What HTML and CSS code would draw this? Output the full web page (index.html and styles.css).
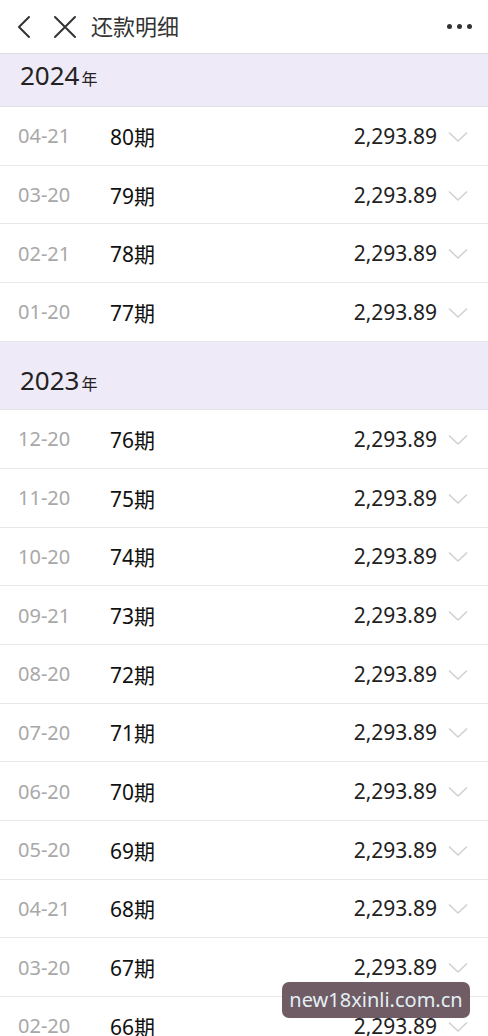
FILE: index.html
```html
<!DOCTYPE html>
<html lang="zh-CN">
<head>
<meta charset="UTF-8" />
<meta name="viewport" content="width=device-width, initial-scale=1" />
<title>还款明细</title>
<link rel="stylesheet" href="styles.css">
</head>
<body>

<div class="topbar">
  <svg class="icon-back" width="16" height="24" viewBox="0 0 16 24"><path d="M13 2 L3 12 L13 22" fill="none" stroke="#333" stroke-width="2" stroke-linecap="round" stroke-linejoin="round"/></svg>
  <svg class="icon-close" width="24" height="24" viewBox="0 0 24 24"><path d="M2 2 L22 22 M22 2 L2 22" fill="none" stroke="#333" stroke-width="2" stroke-linecap="round"/></svg>
  <div class="title">还款明细</div>
  <div class="more"><span></span><span></span><span></span></div>
</div>

<div class="list">
  <div class="year year-first">2024<small>年</small></div>
  <div class="row"><span class="date">04-21</span><span class="term">80期</span><span class="amount">2,293.89</span><svg class="chev" width="20" height="12" viewBox="0 0 20 12"><path d="M1 1.5 L10 10 L19 1.5" fill="none" stroke="#cfcfcf" stroke-width="1.4"/></svg></div>
  <div class="row"><span class="date">03-20</span><span class="term">79期</span><span class="amount">2,293.89</span><svg class="chev" width="20" height="12" viewBox="0 0 20 12"><path d="M1 1.5 L10 10 L19 1.5" fill="none" stroke="#cfcfcf" stroke-width="1.4"/></svg></div>
  <div class="row"><span class="date">02-21</span><span class="term">78期</span><span class="amount">2,293.89</span><svg class="chev" width="20" height="12" viewBox="0 0 20 12"><path d="M1 1.5 L10 10 L19 1.5" fill="none" stroke="#cfcfcf" stroke-width="1.4"/></svg></div>
  <div class="row"><span class="date">01-20</span><span class="term">77期</span><span class="amount">2,293.89</span><svg class="chev" width="20" height="12" viewBox="0 0 20 12"><path d="M1 1.5 L10 10 L19 1.5" fill="none" stroke="#cfcfcf" stroke-width="1.4"/></svg></div>

  <div class="year">2023<small>年</small></div>
  <div class="row"><span class="date">12-20</span><span class="term">76期</span><span class="amount">2,293.89</span><svg class="chev" width="20" height="12" viewBox="0 0 20 12"><path d="M1 1.5 L10 10 L19 1.5" fill="none" stroke="#cfcfcf" stroke-width="1.4"/></svg></div>
  <div class="row"><span class="date">11-20</span><span class="term">75期</span><span class="amount">2,293.89</span><svg class="chev" width="20" height="12" viewBox="0 0 20 12"><path d="M1 1.5 L10 10 L19 1.5" fill="none" stroke="#cfcfcf" stroke-width="1.4"/></svg></div>
  <div class="row"><span class="date">10-20</span><span class="term">74期</span><span class="amount">2,293.89</span><svg class="chev" width="20" height="12" viewBox="0 0 20 12"><path d="M1 1.5 L10 10 L19 1.5" fill="none" stroke="#cfcfcf" stroke-width="1.4"/></svg></div>
  <div class="row"><span class="date">09-21</span><span class="term">73期</span><span class="amount">2,293.89</span><svg class="chev" width="20" height="12" viewBox="0 0 20 12"><path d="M1 1.5 L10 10 L19 1.5" fill="none" stroke="#cfcfcf" stroke-width="1.4"/></svg></div>
  <div class="row"><span class="date">08-20</span><span class="term">72期</span><span class="amount">2,293.89</span><svg class="chev" width="20" height="12" viewBox="0 0 20 12"><path d="M1 1.5 L10 10 L19 1.5" fill="none" stroke="#cfcfcf" stroke-width="1.4"/></svg></div>
  <div class="row"><span class="date">07-20</span><span class="term">71期</span><span class="amount">2,293.89</span><svg class="chev" width="20" height="12" viewBox="0 0 20 12"><path d="M1 1.5 L10 10 L19 1.5" fill="none" stroke="#cfcfcf" stroke-width="1.4"/></svg></div>
  <div class="row"><span class="date">06-20</span><span class="term">70期</span><span class="amount">2,293.89</span><svg class="chev" width="20" height="12" viewBox="0 0 20 12"><path d="M1 1.5 L10 10 L19 1.5" fill="none" stroke="#cfcfcf" stroke-width="1.4"/></svg></div>
  <div class="row"><span class="date">05-20</span><span class="term">69期</span><span class="amount">2,293.89</span><svg class="chev" width="20" height="12" viewBox="0 0 20 12"><path d="M1 1.5 L10 10 L19 1.5" fill="none" stroke="#cfcfcf" stroke-width="1.4"/></svg></div>
  <div class="row"><span class="date">04-21</span><span class="term">68期</span><span class="amount">2,293.89</span><svg class="chev" width="20" height="12" viewBox="0 0 20 12"><path d="M1 1.5 L10 10 L19 1.5" fill="none" stroke="#cfcfcf" stroke-width="1.4"/></svg></div>
  <div class="row"><span class="date">03-20</span><span class="term">67期</span><span class="amount">2,293.89</span><svg class="chev" width="20" height="12" viewBox="0 0 20 12"><path d="M1 1.5 L10 10 L19 1.5" fill="none" stroke="#cfcfcf" stroke-width="1.4"/></svg></div>
  <div class="row"><span class="date">02-20</span><span class="term">66期</span><span class="amount">2,293.89</span><svg class="chev" width="20" height="12" viewBox="0 0 20 12"><path d="M1 1.5 L10 10 L19 1.5" fill="none" stroke="#cfcfcf" stroke-width="1.4"/></svg></div>
</div>

<div class="watermark">new18xinli.com.cn</div>

</body>
</html>
```

FILE: styles.css
```css
html, body {
  margin: 0;
  padding: 0;
  height: 1036px;
  overflow: hidden;
}
body {
  font-family: "Noto Sans", "Noto Sans CJK SC", sans-serif;
  background: #fff;
  color: #1a1a1a;
  position: relative;
}
.topbar {
  height: 53px;
  border-bottom: 1px solid #dcdcdc;
  display: flex;
  align-items: center;
  padding: 0 16px 0 16px;
  background: #fff;
}
.icon-back {
  margin-right: 21px;
}
.icon-close {
  margin-right: 14px;
}
.title {
  font-size: 22px;
  color: #333;
  flex: 1;
  line-height: 1;
  margin-top: -2px;
}
.more {
  display: flex;
  gap: 5px;
}
.more span {
  width: 5px;
  height: 5px;
  border-radius: 50%;
  background: #333;
}
.year {
  box-sizing: border-box;
  height: 68.4px;
  background: #efeaf7;
  font-size: 26px;
  line-height: 30px;
  color: #222;
  padding: 23px 20px 0;
  border-bottom: 1px solid #e4e2e8;
}
.year small {
  font-size: 16px;
  line-height: 1;
  margin-left: 2px;
}
.year-first {
  height: 53px;
  padding-top: 6px;
}
.row {
  height: 57.7px;
  border-bottom: 1px solid #e8e8e8;
  display: flex;
  align-items: center;
  padding-left: 18px;
  padding-right: 20px;
  font-size: 21px;
}
.date {
  width: 92px;
  color: #a8a8a8;
  font-size: 20px;
}
.term {
  flex: 1;
  color: #111;
}
.amount {
  color: #222;
  margin-right: 11px;
}
.chev {
  margin-top: 2px;
}
.watermark {
  position: absolute;
  left: 282px;
  top: 982px;
  width: 188px;
  height: 36px;
  border-radius: 7px;
  background: #705c64;
  color: #e2f0f6;
  font-size: 20px;
  line-height: 36px;
  text-align: center;
}
```
